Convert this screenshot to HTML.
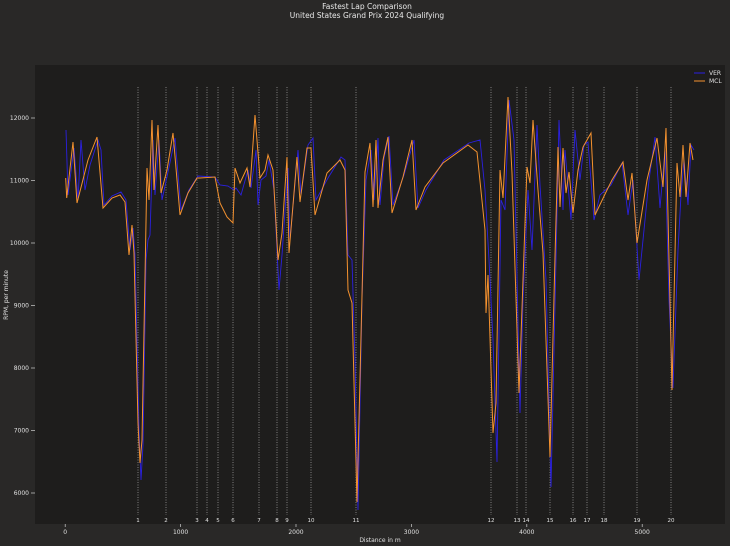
<!DOCTYPE html>
<html><head><meta charset="utf-8"><style>
html,body{margin:0;padding:0;background:#292827;}
svg{display:block;font-family:"DejaVu Sans","Liberation Sans",sans-serif;}
</style></head><body>
<svg width="730" height="546" viewBox="0 0 730 546" xmlns="http://www.w3.org/2000/svg">
<rect width="730" height="546" fill="#292827"/>
<rect x="35" y="65" width="690" height="459" fill="#1e1d1c"/>
<text x="367" y="9" fill="#e8e8e8" font-size="7.5" text-anchor="middle">Fastest Lap Comparison</text>
<text x="367" y="18" fill="#e8e8e8" font-size="7.5" text-anchor="middle">United States Grand Prix 2024 Qualifying</text>
<g stroke="#9a9a9a" stroke-width="0.8" stroke-dasharray="1,1.5">
<line x1="138" y1="87" x2="138" y2="515"/><line x1="166" y1="87" x2="166" y2="515"/>
<line x1="197" y1="87" x2="197" y2="515"/><line x1="207" y1="87" x2="207" y2="515"/>
<line x1="218" y1="87" x2="218" y2="515"/><line x1="233" y1="87" x2="233" y2="515"/>
<line x1="259" y1="87" x2="259" y2="515"/><line x1="277" y1="87" x2="277" y2="515"/>
<line x1="287" y1="87" x2="287" y2="515"/><line x1="311" y1="87" x2="311" y2="515"/>
<line x1="356" y1="87" x2="356" y2="515"/><line x1="491" y1="87" x2="491" y2="515"/>
<line x1="517" y1="87" x2="517" y2="515"/><line x1="526" y1="87" x2="526" y2="515"/>
<line x1="550" y1="87" x2="550" y2="515"/><line x1="573" y1="87" x2="573" y2="515"/>
<line x1="587" y1="87" x2="587" y2="515"/><line x1="604" y1="87" x2="604" y2="515"/>
<line x1="637" y1="87" x2="637" y2="515"/><line x1="671" y1="87" x2="671" y2="515"/>
</g>
<g fill="#e0e0e0" font-size="5.5" text-anchor="middle">
<text x="138" y="522">1</text><text x="166" y="522">2</text><text x="197" y="522">3</text><text x="207" y="522">4</text>
<text x="218" y="522">5</text><text x="233" y="522">6</text><text x="259" y="522">7</text><text x="277" y="522">8</text>
<text x="287" y="522">9</text><text x="311" y="522">10</text><text x="356" y="522">11</text><text x="491" y="522">12</text>
<text x="517" y="522">13</text><text x="526" y="522">14</text><text x="550" y="522">15</text><text x="573" y="522">16</text>
<text x="587" y="522">17</text><text x="604" y="522">18</text><text x="637" y="522">19</text><text x="671" y="522">20</text>
</g>
<polyline fill="none" stroke="#2b20e0" stroke-width="0.9" points="66,130 68,195 74,148 78,200 81,140 85,190 90,165 98,140 101,150 104,205 112,196 121,192 126,200 130,250 133,228 135,255 139,430 141,480 143,445 146,260 148,240 150,235 153,140 155,195 159,140 162,200 168,172 175,138 181,210 189,190 198,176 215,177 220,185 228,186 234,190 236,188 241,195 248,170 251,188 256,150 258,205 261,180 266,176 269,160 274,190 279,290 282,255 288,168 290,240 298,150 301,195 308,145 313,138 316,200 328,178 341,157 345,160 348,255 352,260 355,360 358,510 362,300 366,180 371,150 374,200 378,138 380,205 384,158 389,136 393,205 404,175 414,140 418,208 426,190 444,160 469,143 480,140 485,190 489,260 493,340 497,462 501,200 505,210 509,100 514,140 520,413 523,300 528,190 532,250 537,125 540,185 546,280 551,487 556,260 559,120 563,210 565,150 568,185 571,220 575,130 580,180 584,145 588,142 594,220 600,195 611,185 622,163 628,215 633,180 639,280 645,220 649,180 655,137 660,208 665,150 669,300 673,388 678,250 681,195 684,160 688,205 691,145 694,150"/>
<polyline fill="none" stroke="#f5922f" stroke-width="1" points="65.7,178 66.7,198 73,142 77,203 88,160 97,137 103,208 112,198 120,195 125,202 129,255 132,225 134,253 138,423 140,463 142,440 147,168 149,200 152,120 154,190 158,125 161,193 167,170 173,133 180,215 188,193 197,178 200,178 215,177 220,203 227,217 233,223 235,168 240,183 247,168 250,187 255,115 260,178 265,170 268,155 273,170 278,260 282,233 287,157 289,253 297,157 300,202 307,148 311,148 315,215 327,173 340,160 345,170 348,290 352,303 357,502 365,172 370,143 373,207 376,140 378,208 383,160 388,137 392,213 403,177 412,140 416,210 425,187 443,163 468,145 477,152 485,230 486,313 488,275 493,433 496,403 500,170 503,198 508,97 512,173 519,393 527,167 530,183 533,120 538,190 543,253 550,457 555,257 558,147 560,207 563,148 566,193 569,172 573,213 578,170 583,147 591,133 595,215 607,190 612,180 623,162 628,200 632,173 637,243 647,180 657,138 663,187 666,128 672,390 677,163 680,197 683,145 686,197 690,143 693,160"/>
<g stroke="#cfcfcf" stroke-width="0.7">
<line x1="31" y1="118" x2="35" y2="118"/><line x1="31" y1="180.5" x2="35" y2="180.5"/><line x1="31" y1="243" x2="35" y2="243"/>
<line x1="31" y1="305.5" x2="35" y2="305.5"/><line x1="31" y1="368" x2="35" y2="368"/><line x1="31" y1="430.5" x2="35" y2="430.5"/><line x1="31" y1="493" x2="35" y2="493"/>
<line x1="65.2" y1="524" x2="65.2" y2="527"/><line x1="180.6" y1="524" x2="180.6" y2="527"/><line x1="296" y1="524" x2="296" y2="527"/>
<line x1="411.4" y1="524" x2="411.4" y2="527"/><line x1="526.8" y1="524" x2="526.8" y2="527"/><line x1="642.2" y1="524" x2="642.2" y2="527"/>
</g>
<g fill="#e0e0e0" font-size="6" text-anchor="end">
<text x="29" y="120">12000</text><text x="29" y="182.5">11000</text><text x="29" y="245">10000</text>
<text x="29" y="307.5">9000</text><text x="29" y="370">8000</text><text x="29" y="432.5">7000</text><text x="29" y="495">6000</text>
</g>
<g fill="#e0e0e0" font-size="6" text-anchor="middle">
<text x="65.2" y="534">0</text><text x="180.6" y="534">1000</text><text x="296" y="534">2000</text>
<text x="411.4" y="534">3000</text><text x="526.8" y="534">4000</text><text x="642.2" y="534">5000</text>
<text x="380" y="542">Distance in m</text>
<text transform="translate(8,295) rotate(-90)">RPM, per minute</text>
</g>
<line x1="694" y1="73" x2="705" y2="73" stroke="#2b20e0" stroke-width="1"/>
<line x1="694" y1="81" x2="705" y2="81" stroke="#f5922f" stroke-width="1"/>
<g fill="#e0e0e0" font-size="6"><text x="709" y="75">VER</text><text x="709" y="83">MCL</text></g>
</svg>
</body></html>
